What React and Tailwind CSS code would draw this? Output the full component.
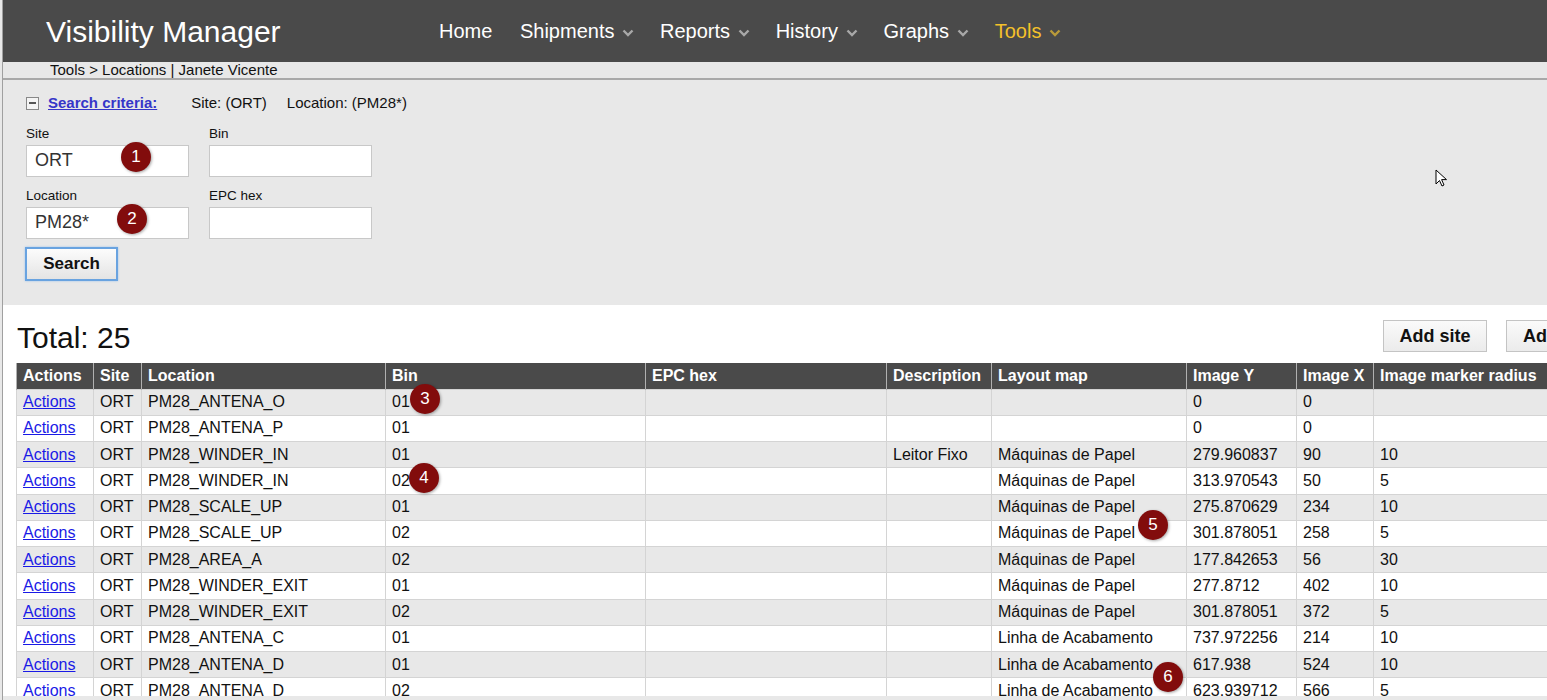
import React from 'react'

const rows = [
  ['PM28_ANTENA_O', '01', '', '', '0', '0', ''],
  ['PM28_ANTENA_P', '01', '', '', '0', '0', ''],
  ['PM28_WINDER_IN', '01', 'Leitor Fixo', 'Máquinas de Papel', '279.960837', '90', '10'],
  ['PM28_WINDER_IN', '02', '', 'Máquinas de Papel', '313.970543', '50', '5'],
  ['PM28_SCALE_UP', '01', '', 'Máquinas de Papel', '275.870629', '234', '10'],
  ['PM28_SCALE_UP', '02', '', 'Máquinas de Papel', '301.878051', '258', '5'],
  ['PM28_AREA_A', '02', '', 'Máquinas de Papel', '177.842653', '56', '30'],
  ['PM28_WINDER_EXIT', '01', '', 'Máquinas de Papel', '277.8712', '402', '10'],
  ['PM28_WINDER_EXIT', '02', '', 'Máquinas de Papel', '301.878051', '372', '5'],
  ['PM28_ANTENA_C', '01', '', 'Linha de Acabamento', '737.972256', '214', '10'],
  ['PM28_ANTENA_D', '01', '', 'Linha de Acabamento', '617.938', '524', '10'],
  ['PM28_ANTENA_D', '02', '', 'Linha de Acabamento', '623.939712', '566', '5'],
]

const cols = [
  ['Actions', 'w-[77px]'],
  ['Site', 'w-[48px]'],
  ['Location', 'w-[244px]'],
  ['Bin', 'w-[260px]'],
  ['EPC hex', 'w-[241px]'],
  ['Description', 'w-[105px]'],
  ['Layout map', 'w-[195px]'],
  ['Image Y', 'w-[110px]'],
  ['Image X', 'w-[77px]'],
  ['Image marker radius', 'w-[200px]'],
]

function Chevron({ color }) {
  return (
    <svg width='12' height='8' viewBox='0 0 12 8' className='ml-[8px] mt-[3px]'>
      <polyline points='1.5,1.5 6,6 10.5,1.5' fill='none' stroke={color} strokeWidth='2.4' />
    </svg>
  )
}

function Badge({ n, className }) {
  return (
    <div
      className={`absolute w-[30px] h-[30px] rounded-full bg-[#820c0c] text-white text-[17px] flex items-center justify-center shadow-[1px_1px_3px_rgba(0,0,0,0.35)] ${className}`}
    >
      {n}
    </div>
  )
}

export default function App() {
  return (
    <div className="relative h-[700px] w-full overflow-hidden bg-[#e8e8e8] pl-[2px] font-['Liberation_Sans',Arial,sans-serif] text-[#111]">
      <div className='flex h-full flex-col border-l border-[#a0a0a0]'>
        {/* header */}
        <header className='flex h-[62px] items-center bg-[#4a4a4a]'>
          <div className='w-[436px] pl-[43px] text-[30px] text-white'>Visibility Manager</div>
          <nav className='flex items-center gap-[25.6px] text-[20px] text-white'>
            <span className='mr-[2px]'>Home</span>
            <span className='flex items-center'>Shipments<Chevron color='#a8a8a8' /></span>
            <span className='flex items-center'>Reports<Chevron color='#a8a8a8' /></span>
            <span className='flex items-center'>History<Chevron color='#a8a8a8' /></span>
            <span className='flex items-center'>Graphs<Chevron color='#a8a8a8' /></span>
            <span className='flex items-center text-[#f5c12a]'>Tools<Chevron color='#b89a3a' /></span>
          </nav>
        </header>

        {/* breadcrumb */}
        <div className='h-[16px] pl-[47px] text-[15px] leading-[16px]'>
          Tools &gt; Locations | Janete Vicente
        </div>
        <div className='h-[2px] bg-[#a8a8a8]'></div>

        {/* search criteria */}
        <div className='h-[225px] bg-[#e8e8e8] pl-[23px] pt-[12px]'>
          <div className='flex items-center text-[15px]'>
            <span className='flex h-[13px] w-[13px] items-center justify-center border border-[#888] bg-[#f4f4f4]'>
              <span className='h-[2px] w-[7px] bg-[#555]'></span>
            </span>
            <span className='ml-[9px] font-bold text-[#3636c8] underline'>Search criteria:</span>
            <span className='ml-[34px]'>Site: (ORT)</span>
            <span className='ml-[20px]'>Location: (PM28*)</span>
          </div>
          <div className='mt-[11px] grid w-[346px] grid-cols-2 gap-x-[20px]'>
            <div>
              <div className='text-[13.5px] leading-[16px]'>Site</div>
              <div className='mt-[3px] flex h-[32px] items-center border border-[#c8c8c8] bg-white pl-[8px] text-[18px] text-[#333]'>ORT</div>
            </div>
            <div>
              <div className='text-[13.5px] leading-[16px]'>Bin</div>
              <div className='mt-[3px] h-[32px] border border-[#c8c8c8] bg-white'></div>
            </div>
            <div className='mt-[11px]'>
              <div className='text-[13.5px] leading-[16px]'>Location</div>
              <div className='mt-[3px] flex h-[32px] items-center border border-[#c8c8c8] bg-white pl-[8px] text-[18px] text-[#333]'>PM28*</div>
            </div>
            <div className='mt-[11px]'>
              <div className='text-[13.5px] leading-[16px]'>EPC hex</div>
              <div className='mt-[3px] h-[32px] border border-[#c8c8c8] bg-white'></div>
            </div>
          </div>
          <button className='mt-[8px] ml-[-1px] flex h-[34px] w-[93px] items-center justify-center border-2 border-[#69a3e0] bg-gradient-to-b from-[#fcfcfc] to-[#e4e4e4] text-[17px] font-bold shadow-[0_0_2px_#9cc4ee]'>
            Search
          </button>
        </div>

        {/* results */}
        <div className='mb-[4px] flex-1 overflow-hidden bg-white'>
          <div className='flex h-[58px] items-center'>
            <div className='ml-[14px] mt-[7px] text-[30px]'>Total: 25</div>
            <div className='ml-auto mr-[-63px] mt-[4px] flex gap-[19px]'>
              <div className='flex h-[32px] w-[104px] items-center justify-center border border-[#c4c4c4] bg-gradient-to-b from-[#fafafa] to-[#ebebeb] text-[18px] font-bold'>Add site</div>
              <div className='flex h-[32px] w-[104px] items-center overflow-hidden whitespace-nowrap border border-[#c4c4c4] bg-gradient-to-b from-[#fafafa] to-[#ebebeb] pl-[16px] text-[18px] font-bold'>Add</div>
            </div>
          </div>
          <table className='ml-[13px] table-fixed border-collapse text-[16px]' style={{ width: 1557 }}>
            <thead>
              <tr className='bg-[#4a4a4a] text-white'>
                {cols.map(([c, w]) => (
                  <th key={c} className={`${w} h-[26px] border-x border-[#b0b0b0] px-[6px] py-0 text-left font-bold whitespace-nowrap`}>
                    {c}
                  </th>
                ))}
              </tr>
            </thead>
            <tbody>
              {rows.map((r, i) => (
                <tr key={i} className={i % 2 === 0 ? 'bg-[#e8e8e8]' : 'bg-white'}>
                  <td className='h-[26.25px] border border-[#d4d4d4] px-[6px] py-0'>
                    <span className='text-[#1a1ae6] underline'>Actions</span>
                  </td>
                  <td className='border border-[#d4d4d4] px-[6px] py-0'>ORT</td>
                  {r.slice(0, 2).map((v, j) => (
                    <td key={j} className='border border-[#d4d4d4] px-[6px] py-0 whitespace-nowrap'>{v}</td>
                  ))}
                  <td className='border border-[#d4d4d4]'></td>
                  {r.slice(2).map((v, j) => (
                    <td key={j} className='border border-[#d4d4d4] px-[6px] py-0 whitespace-nowrap'>{v}</td>
                  ))}
                </tr>
              ))}
            </tbody>
          </table>
        </div>
      </div>

      {/* annotation badges */}
      <Badge n='1' className='left-[121px] top-[142px]' />
      <Badge n='2' className='left-[117px] top-[204px]' />
      <Badge n='3' className='left-[410px] top-[384px]' />
      <Badge n='4' className='left-[409px] top-[463px]' />
      <Badge n='5' className='left-[1138px] top-[510px]' />
      <Badge n='6' className='left-[1153px] top-[662px]' />

      {/* mouse pointer */}
      <svg className='absolute left-[1435px] top-[169px]' width='14' height='20' viewBox='0 0 14 20'>
        <path d='M1 1 L1 15 L4.5 11.5 L7 17 L9 16 L6.6 10.6 L11.5 10.6 Z' fill='#fff' stroke='#000' strokeWidth='1' strokeLinejoin='round' />
      </svg>
    </div>
  )
}
